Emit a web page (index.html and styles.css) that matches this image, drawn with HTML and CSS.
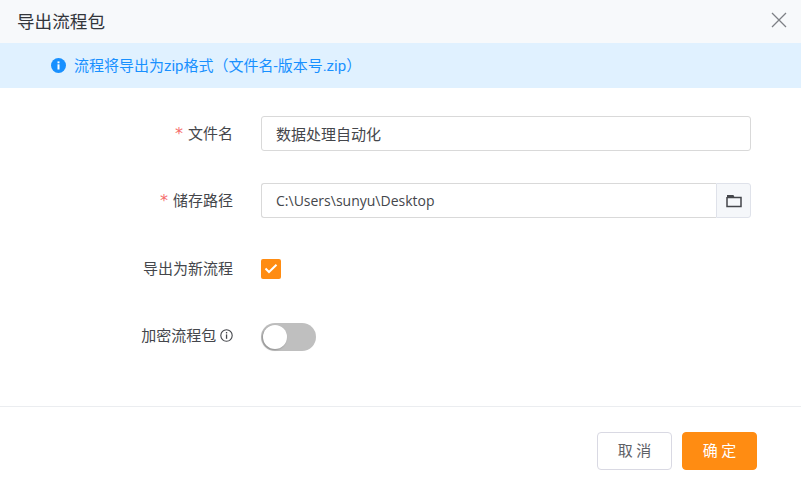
FILE: index.html
```html
<!DOCTYPE html>
<html lang="zh-CN">
<head>
<meta charset="utf-8">
<title>导出流程包</title>
<link rel="stylesheet" href="styles.css">
</head>
<body>
<div class="dialog">
  <header class="head">
    <span class="title">导出流程包</span>
    <button class="close" aria-label="关闭">
      <svg width="16" height="16" viewBox="0 0 16 16"><path d="M1 1L15 15M15 1L1 15" stroke="#7d8085" stroke-width="1.3" fill="none"/></svg>
    </button>
  </header>
  <div class="alert">
    <svg class="alert-icon" width="15" height="15" viewBox="0 0 15 15"><circle cx="7.5" cy="7.5" r="7.5" fill="#1890ff"/><rect x="6.5" y="6.3" width="2" height="5.2" fill="#fff"/><rect x="6.5" y="3.4" width="2" height="1.9" fill="#fff"/></svg>
    <span>流程将导出为zip格式（文件名-版本号.zip）</span>
  </div>
  <form class="form">
    <div class="row">
      <label class="label"><span class="req">*</span>文件名</label>
      <div class="control"><input class="input" value="数据处理自动化"></div>
    </div>
    <div class="row">
      <label class="label"><span class="req">*</span>储存路径</label>
      <div class="control group">
        <input class="input joined path" value="C:\Users\sunyu\Desktop">
        <span class="addon">
          <svg width="16" height="14" viewBox="0 0 16 14"><path d="M1 3V12.5H15V3.5H1" stroke="#44464b" stroke-width="1.5" fill="none"/><path d="M1 1H7.5L8.5 3.5H1Z" fill="#44464b"/></svg>
        </span>
      </div>
    </div>
    <div class="row row-check">
      <label class="label">导出为新流程</label>
      <div class="control">
        <span class="checkbox">
          <svg width="14" height="11" viewBox="0 0 14 11"><path d="M1.5 5.5L5 9L12.5 1.8" stroke="#fff" stroke-width="2" fill="none"/></svg>
        </span>
      </div>
    </div>
    <div class="row row-switch">
      <label class="label label-up">加密流程包
        <svg class="tip" width="13" height="13" viewBox="0 0 13 13"><circle cx="6.5" cy="6.5" r="5.7" stroke="#44464b" stroke-width="1.1" fill="none"/><rect x="5.9" y="5.4" width="1.3" height="4.4" fill="#44464b"/><rect x="5.9" y="3" width="1.3" height="1.4" fill="#44464b"/></svg>
      </label>
      <div class="control"><span class="switch"><span class="knob"></span></span></div>
    </div>
  </form>
  <footer class="foot">
    <button class="btn cancel" type="button">取 消</button>
    <button class="btn ok" type="button">确 定</button>
  </footer>
</div>
</body>
</html>
```

FILE: styles.css
```css
* { box-sizing: border-box; }
html, body { margin: 0; padding: 0; height: 100%; }
body {
  background: #fff;
  font-family: Roboto, "Noto Sans CJK SC", sans-serif;
  color: #44464b;
  overflow: hidden;
}
.dialog { width: 801px; height: 492px; display: flex; flex-direction: column; }
.head {
  height: 43px;
  background: #f7f9fb;
  display: flex;
  align-items: center;
  justify-content: space-between;
  padding: 0 14px 0 17px;
}
.title { font-size: 17.6px; color: #33363b; line-height: 45px; padding-top: 1px; }
.close { border: 0; background: none; padding: 0; width: 16px; height: 16px; display: block; margin-top: -4px; }
.close svg { display: block; }
.alert {
  height: 45px;
  background: #e0f1ff;
  color: #1890ff;
  font-size: 15px;
  line-height: 20px;
  display: flex;
  align-items: center;
  padding-left: 51px;
  gap: 8px;
}
.alert-icon { flex: none; margin-top: -1px; }
.form {
  padding-top: 28px;
  height: 319px;
  border-bottom: 1px solid #ebedf0;
  display: flex;
  flex-direction: column;
  gap: 32px;
}
.row { display: flex; align-items: center; height: 35px; flex: none; }
.row-check { margin-top: 1px; }
.row-switch { height: 34px; margin-top: 2px; }
.label {
  width: 233px;
  text-align: right;
  font-size: 15px;
  line-height: 20px;
  color: #44464b;
  display: block;
}
.label-up { padding-bottom: 2px; }
.req {
  color: #f56c6c;
  margin-right: 5px;
  font-family: "DejaVu Sans", sans-serif;
  font-size: 16px;
}
.tip { vertical-align: -1px; margin-left: 0; }
.control { margin-left: 28px; width: 490px; }
.input {
  width: 100%;
  height: 35px;
  border: 1px solid #d9d9d9;
  border-radius: 3px;
  padding: 0 14px;
  font: inherit;
  font-size: 15px;
  color: #44464b;
  background: #fff;
  outline: none;
  display: block;
}
.path { font-family: "Open Sans", "Noto Sans CJK SC", sans-serif; font-size: 14px; }
.group { display: flex; }
.joined { flex: 1; min-width: 0; border-radius: 3px 0 0 3px; border-right: 0; }
.addon {
  flex: none;
  width: 35px;
  height: 35px;
  background: #f5f7fa;
  border: 1px solid #dfe2ea;
  border-radius: 0 3px 3px 0;
  display: flex;
  align-items: center;
  justify-content: center;
}
.checkbox {
  width: 20px;
  height: 20px;
  border-radius: 2px;
  background: #ff8c12;
  display: flex;
  align-items: center;
  justify-content: center;
}
.switch {
  display: block;
  position: relative;
  width: 55px;
  height: 28px;
  border-radius: 14px;
  background: #bfbfbf;
}
.knob {
  position: absolute;
  left: 2px;
  top: 2px;
  width: 24px;
  height: 24px;
  border-radius: 50%;
  background: #fff;
  box-shadow: -1px 1px 2px rgba(0, 0, 0, 0.25);
}
.foot {
  display: flex;
  justify-content: flex-end;
  gap: 10px;
  padding: 25px 44px 0 0;
}
.btn {
  width: 75px;
  height: 38px;
  border-radius: 4px;
  font-family: inherit;
  font-size: 15px;
  padding: 0 0 3px;
}
.cancel { background: #fff; border: 1px solid #d9d9e3; color: #5e6167; }
.ok { background: #ff8c12; border: 1px solid #ff8c12; color: #fff; }
```
